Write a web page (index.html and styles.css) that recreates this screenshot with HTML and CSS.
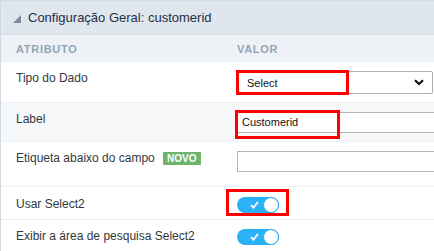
FILE: index.html
```html
<!DOCTYPE html>
<html>
<head>
<meta charset="utf-8">
<link rel="stylesheet" href="styles.css">
</head>
<body>
<div class="panel">
  <div class="panel-head">
    <svg class="caret" width="8" height="8" viewBox="0 0 8 8"><polygon points="8,0 8,8 0,8" fill="#7d8a97"/></svg>
    <span class="title">Configuração Geral: customerid</span>
  </div>
  <div class="cols">
    <div class="c1">ATRIBUTO</div>
    <div class="c2">VALOR</div>
  </div>
  <div class="row r1">
    <div class="c1">Tipo do Dado</div>
    <div class="c2">
      <div class="select"><span>Select</span>
        <svg class="chev" width="10" height="7" viewBox="0 0 10 7"><path d="M1 1.2 L5 5 L9 1.2" fill="none" stroke="#111" stroke-width="2.2"/></svg>
      </div>
      <div class="mark m1"></div>
    </div>
  </div>
  <div class="row r2 alt">
    <div class="c1">Label</div>
    <div class="c2">
      <div class="input">Customerid</div>
      <div class="mark m2"></div>
    </div>
  </div>
  <div class="row r3">
    <div class="c1">Etiqueta abaixo do campo <span class="badge">NOVO</span></div>
    <div class="c2">
      <div class="input"></div>
    </div>
  </div>
  <div class="row r4">
    <div class="c1">Usar Select2</div>
    <div class="c2">
      <div class="toggle"><svg width="9" height="8" viewBox="0 0 9 8"><path d="M1 4.2 L3.4 6.6 L8 1" fill="none" stroke="#fff" stroke-width="1.8"/></svg><span class="knob"></span></div>
      <div class="mark m3"></div>
    </div>
  </div>
  <div class="row r5">
    <div class="c1">Exibir a área de pesquisa Select2</div>
    <div class="c2">
      <div class="toggle"><svg width="9" height="8" viewBox="0 0 9 8"><path d="M1 4.2 L3.4 6.6 L8 1" fill="none" stroke="#fff" stroke-width="1.8"/></svg><span class="knob"></span></div>
    </div>
  </div>
</div>
</body>
</html>
```
FILE: styles.css
```css
* { box-sizing: border-box; }
html, body { margin: 0; padding: 0; background: #fff; }
body { font-family: "Liberation Sans", Arial, sans-serif; font-size: 12px; color: #33383d; width: 434px; height: 251px; overflow: hidden; }
.panel { border-left: 1px solid #cfd8e2; border-top: 1px solid #d3dbe3; height: 251px; overflow: hidden; }
.panel-head { height: 34px; background: #dfe6ed; border-bottom: 1px solid #d6dde5; display: flex; align-items: center; padding-left: 12px; }
.caret { margin-top: 3px; margin-right: 7px; }
.title { font-size: 13px; color: #1f3047; }
.cols { height: 27px; background: #eef2f6; display: flex; align-items: center; font-size: 11px; font-weight: bold; letter-spacing: 0.7px; color: #90a6b6; }
.c1 { width: 236px; padding-left: 15px; flex: none; }
.c2 { flex: 1; position: relative; min-width: 0; }
.row { display: flex; align-items: flex-start; padding-top: 9px; border-bottom: 1px solid #edf0f4; }
.row .c1 { padding-top: 0; }
.alt { background: #f6f8fa; }
.r1 { height: 41px; }
.r2 { height: 39px; }
.r3 { height: 45px; }
.r4 { height: 33px; padding-top: 10px; }
.r5 { height: 40px; }
.select { width: 196px; height: 23px; border: 1px solid #a9b2bb; border-radius: 2px; background: #fff; display: flex; align-items: center; justify-content: space-between; padding: 0 8px 0 9px; font-size: 11px; color: #111; }
.chev { display: block; }
.input { width: 220px; height: 21px; border: 1px solid #aeb6be; border-right: none; background: #fff; padding-left: 4px; font-size: 11px; line-height: 19px; color: #111; }
.badge { display: inline-block; margin-left: 5px; background: #6fb46d; color: #fff; font-size: 10px; font-weight: bold; padding: 1px 4px; line-height: 11px; border-radius: 1px; vertical-align: 0; }
.toggle { width: 42px; height: 16px; border-radius: 8px; background: #2bb1f6; position: relative; display: flex; align-items: center; padding-left: 13px; }
.toggle svg { display: block; }
.knob { position: absolute; right: 0; top: 0; width: 16px; height: 16px; border-radius: 50%; background: #fff; border: 1.5px solid #2bb1f6; }
.mark { position: absolute; border: 3px solid #f00; pointer-events: none; }
.m1 { left: -1px; top: -1px; width: 113px; height: 25px; }
.m2 { left: -2px; top: -2px; width: 105px; height: 29px; }
.m3 { left: -11px; top: -8px; width: 63px; height: 27px; }
```
